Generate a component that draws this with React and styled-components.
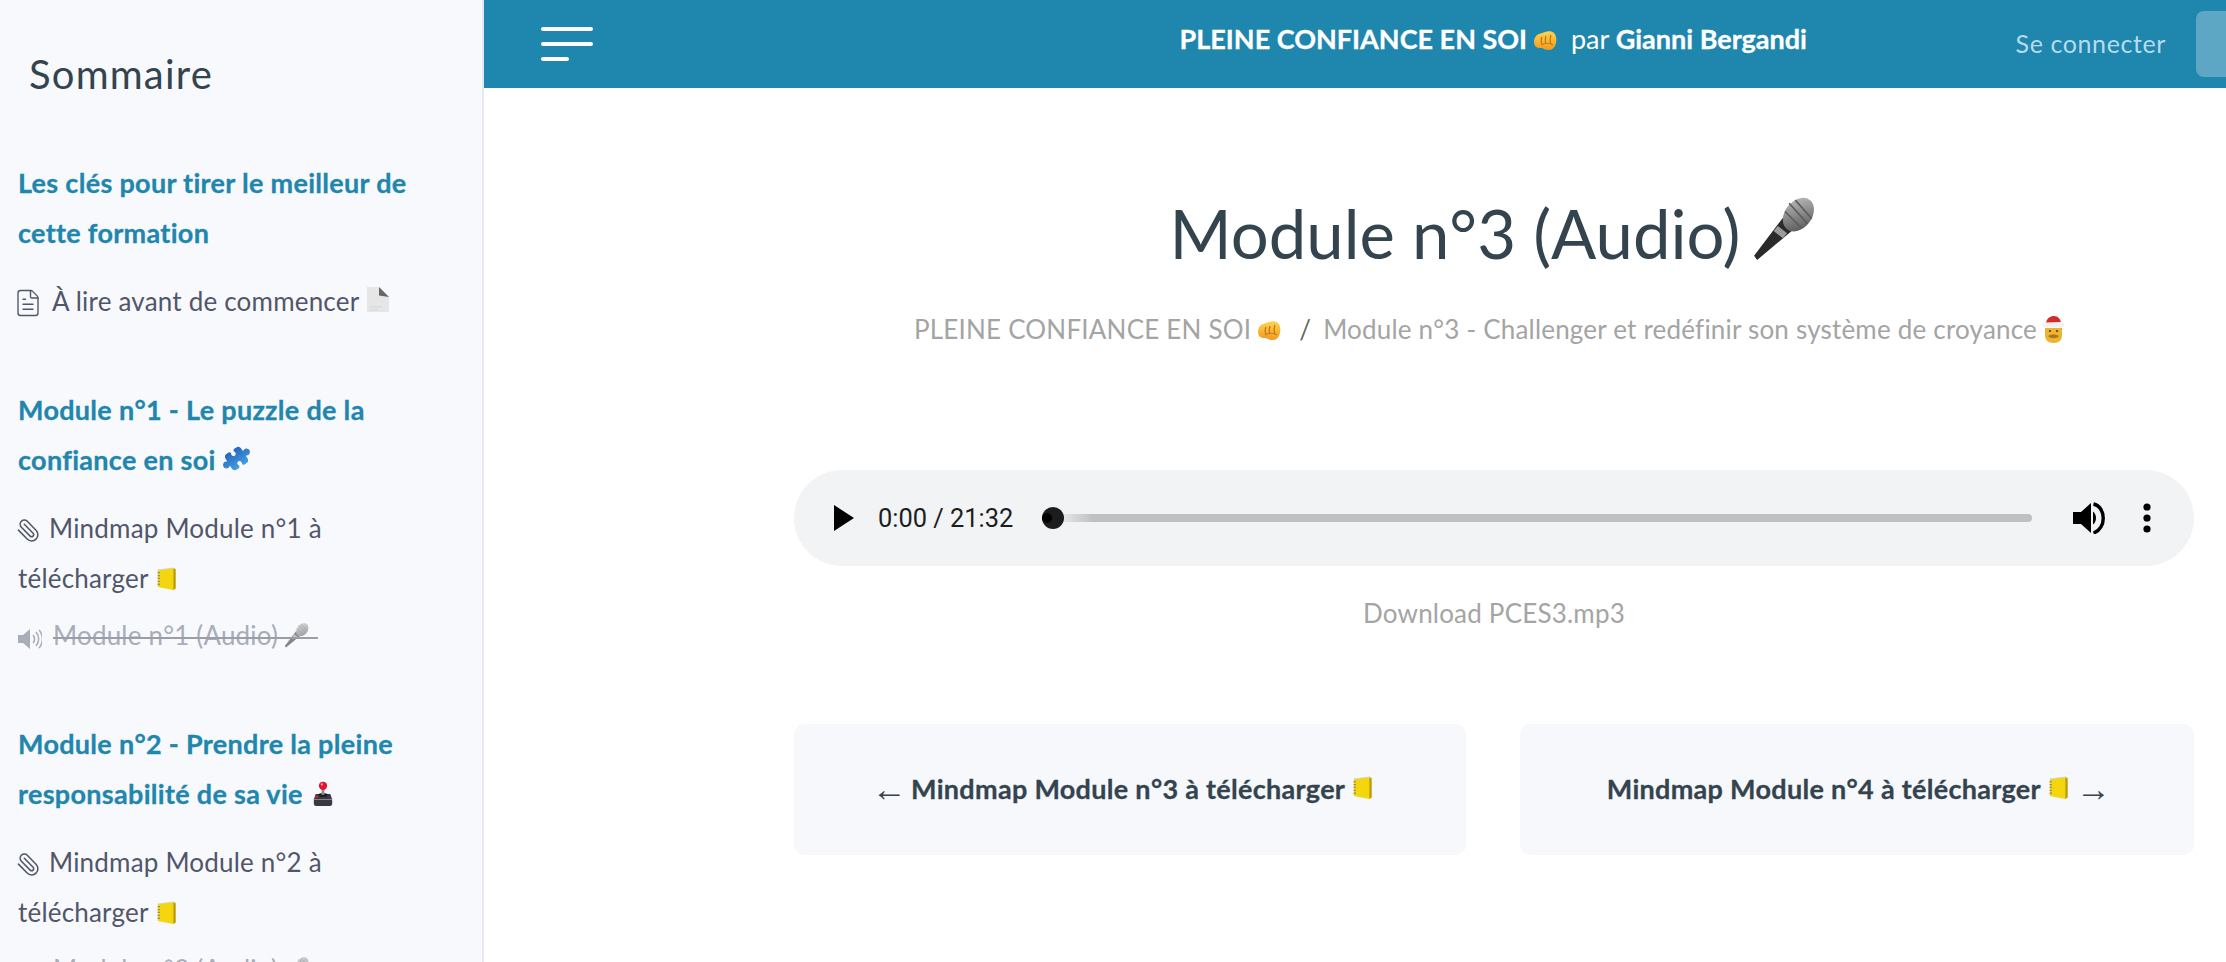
import React from "react";
import styled, { createGlobalStyle } from "styled-components";
import { FileText, Paperclip, Puzzle as PuzzleShape } from "lucide-react";

const Global = createGlobalStyle`
  html, body { margin: 0; padding: 0; height: 100%; overflow: hidden; background: #fff; }
  * { box-sizing: border-box; }
  body { font-family: Lato, "Noto Sans", sans-serif; color: #34444f; }
`;

const Page = styled.div`display: flex; width: 2226px; height: 962px; overflow: hidden;`;
const Sidebar = styled.aside`
  width: 484px; flex: none; height: 100%; overflow: hidden; background: #f8f9fd;
  border-right: 2px solid #e6e9f5; padding: 0 18px;
`;
const SideTitle = styled.h2`
  margin: 0 0 55px 11px; padding-top: 48px; height: 103px; font-size: 40px; line-height: 52px; font-weight: 400; color: #34444f; letter-spacing: 1.2px;
`;
const Section = styled.section`margin-bottom: 59px;`;
const SectionTitle = styled.h3`
  margin: 0 0 18px; font-size: 27px; letter-spacing: 0.3px; line-height: 50px; font-weight: 700; color: #1f86ae; width: 420px;
  -webkit-text-stroke: 0.3px #1f86ae;
`;
const Lesson = styled.div`
  margin: ${p => (p.$done ? "-2px 0 9px" : "0 0 9px")}; font-size: 26px; letter-spacing: 0.2px; line-height: 50px; color: ${p => (p.$done ? "#a9adb9" : "#51566a")}; width: 400px;
`;
const Struck = styled.span`
  position: relative; display: inline-block; padding-right: 8px;
  &::after { content: ""; position: absolute; left: 0; right: 0; top: 27px; height: 2px; background: #9a9ea9; }
  svg { opacity: 0.55; }
`;
const Glyph = styled.span`display: inline-flex; vertical-align: ${p => p.$v ?? -4}px; margin: 0 ${p => p.$gap ?? 10}px 0 ${p => p.$left ?? 0}px;`;
const Emo = styled.svg`display: inline-block; vertical-align: ${p => p.$v ?? -3}px; margin-left: ${p => p.$l ?? 4}px;`;

const Main = styled.main`flex: 1; min-width: 0; display: flex; flex-direction: column;`;
const Header = styled.header`
  height: 88px; flex: none; background: #1f86ae; display: flex; align-items: center; position: relative; padding-left: 57px; overflow: hidden;
`;
const Burger = styled.div`display: flex; flex-direction: column; gap: 11px; width: 52px; margin-top: -1px;`;
const BurgerLine = styled.i`display: block; height: 4px; border-radius: 2px; background: #fff; width: ${p => p.$w}px;`;
const HeaderTitle = styled.div`
  flex: 1; text-align: center; color: #fff; font-size: 27px; font-weight: 400; margin-top: -11px; padding-left: 378px; white-space: nowrap;
  b { font-weight: 700; -webkit-text-stroke: 0.3px #fff; }
`;
const Login = styled.a`color: #b6dceb; font-size: 25px; letter-spacing: 0.6px; margin: -2px 30px 0 0; white-space: nowrap;`;
const SignUp = styled.div`width: 30px; height: 66px; border-radius: 8px 0 0 8px; background: #5da6c4; flex: none;`;

const Content = styled.div`padding: 0 32px 0 310px; display: flex; flex-direction: column; align-items: stretch;`;
const Title = styled.h1`
  margin: 99px 0 0; text-align: center; font-size: 67px; line-height: 92px; font-weight: 400; color: #34444f; white-space: nowrap;
`;
const Crumbs = styled.div`
  margin-top: 33px; padding-right: 10px; text-align: center; font-size: 26px; letter-spacing: 0.2px; line-height: 34px; color: #a4a4a4; white-space: nowrap;
`;
const CrumbSep = styled.span`margin: 0 12px 0 18px; color: #666;`;
const Player = styled.div`
  margin-top: 124px; height: 96px; border-radius: 48px; background: #f1f3f4; display: flex; align-items: center; padding: 0 43px 0 40px;
  font-family: Roboto, sans-serif; color: #1d1d1d;
`;
const Time = styled.span`font-size: 25.4px; margin-left: 24px; white-space: nowrap; width: 175px; flex: none;`;
const Track = styled.div`
  flex: 1; height: 8px; border-radius: 4px; position: relative; margin-right: 41px;
  background: linear-gradient(90deg, #f1f3f4 0, #c0c0c0 40px);
`;
const Thumb = styled.span`
  position: absolute; left: -11px; top: -7px; width: 22px; height: 22px; border-radius: 50%; background: #1c1c1c;
  &::before { content: ""; position: absolute; left: 0; top: 6px; width: 10px; height: 10px; border-radius: 50%; background: #000; }
`;
const Download = styled.div`margin-top: 30px; text-align: center; font-size: 26px; letter-spacing: 0.2px; line-height: 34px; color: #a4a4a4;`;
const Nav = styled.nav`margin-top: 94px; display: grid; grid-template-columns: 672px 674px; justify-content: space-between;`;
const NavCard = styled.a`
  height: 131px; border-radius: 10px; background: #f7f8fc; display: flex; align-items: center; justify-content: center; white-space: nowrap;
  padding: 0 ${p => p.$right ?? 0}px 3px ${p => p.$left ?? 0}px; font-size: 27px; letter-spacing: 0.3px; font-weight: 700; color: #34444f; -webkit-text-stroke: 0.3px #34444f;
`;
const Arrow = styled.span`
  font-weight: 400; font-family: "Liberation Sans", sans-serif; font-size: 35px; line-height: 1; color: #34444f; margin: ${p => p.$m}; -webkit-text-stroke: 0;
`;

const Fist = () => (
  <Emo width={24} height={21} viewBox="0 0 24 21" $l={6} $v={-2}>
    <defs><linearGradient id="fg" x1="0" y1="0" x2="0" y2="1"><stop offset="0" stopColor="#ffd24d" /><stop offset="1" stopColor="#f19a1f" /></linearGradient></defs>
    <path d="M1 12C1 8 3 5 6 4c2-1 4-1 6-2 3-1 7-1 9 1 2 2 3 6 2 10-1 4-3 7-7 7-3 0-5-1-7-2-2 0-4 0-6-1-1-1-2-3-2-5z" fill="url(#fg)" />
    <path d="M9 7c-1 2-1 5 0 7M13 6c-1 3-1 6 0 8M18 5c-1 3-1 7 0 9" stroke="#b96f10" strokeWidth="1.100" fill="none" />
    <path d="M8 15c4-2 9-2 12 0" stroke="#c97d17" strokeWidth="1.100" fill="none" />
  </Emo>
);
const Mic = ({ s = 30, l = 4, v = -3, id = "mg" }) => (
  <Emo width={s} height={s} viewBox="0 0 32 32" $l={l} $v={v}>
    <defs><linearGradient id={id} x1="0" y1="0" x2="1" y2="1"><stop offset="0" stopColor="#c4c4c4" /><stop offset="1" stopColor="#4e4e4e" /></linearGradient></defs>
    <path d="M2.500 31.500L1 29.500 15 11l6 5z" fill="#2a2a2a" />
    <path d="M12.500 15l4.500 3.500-2 2.500-4.500-3.500z" fill="#9a9a9a" />
    <ellipse cx="22.500" cy="9.500" rx="6.500" ry="9" transform="rotate(38 22.500 9.500)" fill={`url(#${id})`} />
    <path d="M18 4l9 10M21 2.500l8 9M16 8l8 8" stroke="#5c5c5c" strokeWidth=".8" />
  </Emo>
);
const Note = ({ v = -3 }) => (
  <Emo width={22} height={24} viewBox="0 0 24 24" preserveAspectRatio="none" $l={7} $v={v}>
    <path d="M2 3l17-2 1 .5V22.500L19 23 2 20z" fill="#f4d60f" />
    <path d="M19 1v22l2.500-1.500V2z" fill="#b99c06" />
    <path d="M2 3l17-2 2 1" stroke="#d2d3c4" strokeWidth="1" fill="none" />
    <path d="M3 5v14" stroke="#8d8a6a" strokeWidth="2.400" strokeDasharray="1.300 1.600" />
  </Emo>
);
const PageEmo = () => (
  <Emo width={22} height={25} viewBox="0 0 22 25" $l={8} $v={-1}>
    <path d="M0 0h12l10 10v15H0z" fill="#e6e6e6" />
    <path d="M12 0l10 10-10-1.500z" fill="#666" />
    <path d="M3 20h12M3 23h8" stroke="#d6d6d6" strokeWidth="1" />
  </Emo>
);
const PuzzleWrap = styled.span`display: inline-flex; vertical-align: -2px; margin-left: 7px; transform: rotate(12deg);`;
const PuzzleEmoji = () => (
  <PuzzleWrap>
    <PuzzleShape size={27} fill="url(#pz)" stroke="url(#pz)" strokeWidth={1}>
      <defs><linearGradient id="pz" x1="0" y1="0" x2="1" y2="1"><stop offset="0" stopColor="#1d4fb0" /><stop offset="1" stopColor="#4db4f0" /></linearGradient></defs>
    </PuzzleShape>
  </PuzzleWrap>
);
const Joystick = () => (
  <Emo width={22} height={26} viewBox="0 0 24 28" $l={9} $v={-3}>
    <path d="M2 20l2-6h16l2 6v5a2 2 0 0 1-2 2H4a2 2 0 0 1-2-2z" fill="#3a3a42" />
    <path d="M2 20h20" stroke="#8a8a92" strokeWidth="1" />
    <ellipse cx="12" cy="15" rx="5" ry="2" fill="#1c1c20" />
    <rect x="10.500" y="7" width="3" height="8" fill="#8d8d95" />
    <circle cx="12" cy="5" r="4.500" fill="#e8132b" />
    <circle cx="10.800" cy="3.600" r="1.200" fill="#ffb0b8" />
    <ellipse cx="5" cy="17" rx="2" ry="1" fill="#d9202f" />
  </Emo>
);
const Santa = () => (
  <Emo width={21} height={28} viewBox="0 0 21 28" $l={6} $v={-4}>
    <path d="M2 13h17v7c0 5-3 8-8.500 8S2 25 2 20z" fill="#eeb32f" />
    <path d="M3 8c1-5 4-7 8-7 4 0 6 3 7 6z" fill="#d52b2a" />
    <rect x="0" y="7.500" width="21" height="5" rx="2.500" fill="#f2f2f2" />
    <path d="M5 21c3-2 8-2 11 0-2 3-9 3-11 0z" fill="#a9781d" />
    <circle cx="7" cy="16" r="1.100" fill="#55330c" /><circle cx="14" cy="16" r="1.100" fill="#55330c" />
  </Emo>
);
const SpeakerSmall = () => (
  <svg width="24" height="20" viewBox="0 0 24 20">
    <path d="M0 6h5l7-6v20l-7-6H0z" fill="#a9adb9" />
    <path d="M15 6c2 2 2 6 0 8M18 3c3.500 4 3.500 10 0 14M21 1c4.500 5 4.500 13 0 18" fill="none" stroke="#a9adb9" strokeWidth="1.600" />
  </svg>
);

const Clip = styled(Paperclip)`transform: scaleX(-1); color: #51566a;`;

const PlayIcon = () => (
  <svg width="20" height="26" viewBox="0 0 20 26"><path d="M0 0l20 13L0 26z" fill="#000" /></svg>
);
const VolumeIcon = () => (
  <svg width="34" height="32" viewBox="0 0 34 32">
    <path d="M0 10h8l10-9v30L8 22H0z" fill="#000" />
    <path d="M20 9.500c4 3 4 10 0 13z" fill="#000" />
    <path d="M20.500 2c13 3 13 25 0 29" fill="none" stroke="#000" strokeWidth="3.400" />
  </svg>
);
const MoreIcon = () => (
  <svg width="8" height="30" viewBox="0 0 8 30">
    <circle cx="4" cy="4" r="3.600" fill="#000" /><circle cx="4" cy="15" r="3.600" fill="#000" /><circle cx="4" cy="26" r="3.600" fill="#000" />
  </svg>
);
const MoreWrap = styled.span`display: flex; margin-left: 36px;`;

export default function App() {
  return (
    <Page>
      <Global />
      <Sidebar>
        <SideTitle>Sommaire</SideTitle>
        <Section>
          <SectionTitle>Les clés pour tirer le meilleur de cette formation</SectionTitle>
          <Lesson><Glyph $left={-5} $gap={9} $v={-7}><FileText size={30} strokeWidth={1.100} /></Glyph>À lire avant de commencer<PageEmo /></Lesson>
        </Section>
        <Section>
          <SectionTitle>Module n°1 - Le puzzle de la confiance en soi<PuzzleEmoji /></SectionTitle>
          <Lesson><Glyph $left={-2} $gap={8} $v={-5}><Clip size={25} strokeWidth={1.500} /></Glyph>Mindmap Module n°1 à télécharger<Note /></Lesson>
          <Lesson $done><Glyph $gap={11}><SpeakerSmall /></Glyph><Struck>Module n°1 (Audio)<Mic s={26} l={6} id="m1" /></Struck></Lesson>
        </Section>
        <Section>
          <SectionTitle>Module n°2 - Prendre la pleine responsabilité de sa vie<Joystick /></SectionTitle>
          <Lesson><Glyph $left={-2} $gap={8} $v={-5}><Clip size={25} strokeWidth={1.500} /></Glyph>Mindmap Module n°2 à télécharger<Note /></Lesson>
          <Lesson $done><Glyph $gap={11}><SpeakerSmall /></Glyph><Struck>Module n°2 (Audio)<Mic s={26} l={6} id="m2" /></Struck></Lesson>
        </Section>
      </Sidebar>
      <Main>
        <Header>
          <Burger>
            <BurgerLine $w={52} />
            <BurgerLine $w={52} />
            <BurgerLine $w={28} />
          </Burger>
          <HeaderTitle><b>PLEINE CONFIANCE EN SOI</b><Fist />&nbsp;&nbsp;par <b>Gianni Bergandi</b></HeaderTitle>
          <Login>Se connecter</Login>
          <SignUp />
        </Header>
        <Content>
          <Title>Module n°3 (Audio)<Mic s={66} l={12} v={-2} id="m3" /></Title>
          <Crumbs>PLEINE CONFIANCE EN SOI<Fist /><CrumbSep>/</CrumbSep>Module n°3 - Challenger et redéfinir son système de croyance<Santa /></Crumbs>
          <Player>
            <PlayIcon />
            <Time>0:00 / 21:32</Time>
            <Track><Thumb /></Track>
            <VolumeIcon />
            <MoreWrap><MoreIcon /></MoreWrap>
          </Player>
          <Download>Download PCES3.mp3</Download>
          <Nav>
            <NavCard $right={14}><Arrow $m="0 4px 0 0">←</Arrow>Mindmap Module n°3 à télécharger<Note /></NavCard>
            <NavCard $left={4}>Mindmap Module n°4 à télécharger<Note /><Arrow $m="0 0 0 6px">→</Arrow></NavCard>
          </Nav>
        </Content>
      </Main>
    </Page>
  );
}
